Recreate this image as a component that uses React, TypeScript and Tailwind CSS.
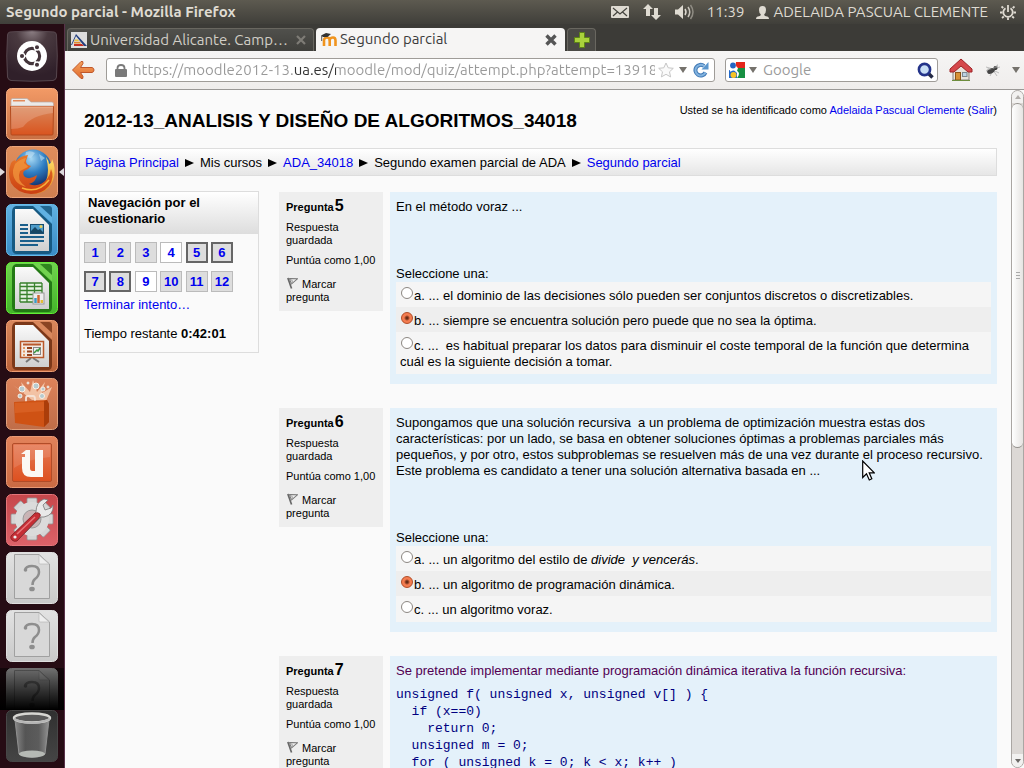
import { useState, type ReactNode } from "react";

/* ---------- Launcher icons ---------- */

function Gradient({ id, from, to }: { id: string; from: string; to: string }) {
  return (
    <linearGradient id={id} x1="0" y1="0" x2="0" y2="1">
      <stop offset="0" stopColor={from} />
      <stop offset="1" stopColor={to} />
    </linearGradient>
  );
}

function Tile({ id, from, to, edge, children }: { id: string; from: string; to: string; edge: string; children: ReactNode }) {
  return (
    <svg viewBox="0 0 52 52" className="block size-[52px]" aria-hidden="true">
      <defs>
        <Gradient id={id} from={from} to={to} />
      </defs>
      <rect x="0.5" y="0.5" width="51" height="51" rx="5" fill={`url(#${id})`} stroke={edge} />
      {children}
    </svg>
  );
}

function DashIcon() {
  return (
    <svg viewBox="0 0 52 52" className="block size-[52px]" aria-hidden="true">
      <defs>
        <radialGradient id="dash" cx="0.5" cy="0" r="0.9">
          <stop offset="0" stopColor="#8d8085" />
          <stop offset="0.35" stopColor="#4a3a40" />
          <stop offset="1" stopColor="#30202a" />
        </radialGradient>
      </defs>
      <path d="M4 2Q26-0.5 48 2Q50 2 50.500 5Q52 26 50.500 47Q50 50 47 50.500Q26 52 5 50.500Q2 50 1.500 47Q0 26 1.500 5Q2 2 4 2Z" fill="url(#dash)" stroke="#57474e" />
      <circle cx="26" cy="26" r="15" fill="#fff" />
      <circle cx="26" cy="26" r="7.600" fill="none" stroke="#44353b" strokeWidth="3.200" />
      <g stroke="#fff" strokeWidth="1.300">
        <path d="M26 26L15 26M26 26L31.500 16.500M26 26L31.500 35.500" />
        <circle cx="16" cy="26" r="2.700" fill="#44353b" />
        <circle cx="31" cy="17.300" r="2.700" fill="#44353b" />
        <circle cx="31" cy="34.700" r="2.700" fill="#44353b" />
      </g>
      <circle cx="26" cy="26" r="5.800" fill="#fff" />
    </svg>
  );
}

function FolderIcon() {
  return (
    <Tile id="tile-folder" from="#f29a66" to="#c97044" edge="#f3ab80">
      <defs>
        <Gradient id="folder" from="#d9875a" to="#d9541f" />
      </defs>
      <path d="M5 18V12Q5 10.500 6.500 10.500H21L25 14H46Q47.500 14 47.500 16V18Z" fill="#eceae8" stroke="#b8a8a0" strokeWidth="0.700" />
      <rect x="7" y="12" width="12" height="1.500" fill="#e28a5a" />
      <path d="M4.500 18.500H47.500L47 46Q47 47 46 47H6Q5 47 5 46Z" fill="url(#folder)" stroke="#b2491c" />
      <path d="M5 19H47V25Q26 27 17 39Q12 41 5 41Z" fill="#fff" opacity="0.180" />
      <path d="M5 19H47" stroke="#f4b48f" />
    </Tile>
  );
}

function FirefoxIcon() {
  return (
    <Tile id="tile-ff" from="#df8d5c" to="#cf7f50" edge="#eca57c">
      <defs>
        <radialGradient id="globe" cx="0.45" cy="0.25" r="0.75">
          <stop offset="0" stopColor="#a6d8f3" />
          <stop offset="0.5" stopColor="#2f7fc4" />
          <stop offset="1" stopColor="#12326f" />
        </radialGradient>
        <Gradient id="fox" from="#e8792a" to="#ca3e12" />
        <Gradient id="foxtail" from="#ffe36b" to="#ec8a1c" />
      </defs>
      <circle cx="27" cy="22" r="18.500" fill="url(#globe)" />
      <path d="M20 6Q25 4 29 7L25 12L19 11ZM33 8L39 12L35 15Z" fill="#c9e6f5" opacity="0.550" />
      <path d="M40 11Q43 15 43 18Q46 17 46 13Q50 22 48 31Q44 47 27 48Q36 43 40 35Q44 25 40 11Z" fill="url(#foxtail)" />
      <path d="M5 17Q8 13 10 15Q14 10 22 9L20 15Q20 19 25 20Q22 24 18 25Q16 28 19 31Q24 34 31 29Q30 36 23 38Q33 42 41 33Q44 29 45 23Q49 31 43 40Q36 48 25 48Q11 47 5 37Q1 27 5 17Z" fill="url(#fox)" />
      <path d="M9 18Q14 13 20 12L18 17Q22 20 22 21L14 25Q10 34 20 41Q6 37 7 24Z" fill="#f49a3e" opacity="0.700" />
      <path d="M16 42Q32 48 43 34" fill="none" stroke="#f8b13a" strokeWidth="1.500" />
    </Tile>
  );
}

function OfficeTile({ id, from, to, dark, edge, children }: { id: string; from: string; to: string; dark: string; edge: string; children: ReactNode }) {
  return (
    <Tile id={id} from={from} to={to} edge={edge}>
      <defs>
        <Gradient id={`${id}-page`} from="#fafafa" to="#cfcfcf" />
      </defs>
      <path d="M10 2Q6 3 6 8V44Q6 50 11 50H42Q46 50 46 45V20L27 2Z" fill={dark} />
      <path d="M28 2H43Q46 2 46 6V19Z" fill={from} />
      <path d="M34 2H43Q46 2 46 5V13Z" fill={dark} opacity="0.850" />
      <path d="M9 5H27L43 21V47H9Z" fill={`url(#${id}-page)`} />
      {children}
    </Tile>
  );
}

function WriterIcon() {
  return (
    <OfficeTile id="writer" from="#61b1e2" to="#398bc5" dark="#175981" edge="#67bce9">
      <path d="M14 21H22M14 25H22M14 29H22M14 33H38M14 37H38M14 41H32" stroke="#1b5f8b" strokeWidth="2" />
      <rect x="24.500" y="20.500" width="13" height="9" fill="#4e9cca" stroke="#184e71" />
      <path d="M25 29V27L29 23L32 26L34 25L37 28V29Z" fill="#174663" />
      <circle cx="35" cy="22.500" r="1.500" fill="#edd05d" />
    </OfficeTile>
  );
}

function CalcIcon() {
  return (
    <OfficeTile id="calc" from="#72d34f" to="#43b52a" dark="#237915" edge="#62ef36">
      <rect x="14" y="21" width="22" height="19" fill="#e8f3e4" />
      <path d="M14 21H36M14 24.500H36M14 28.500H36M14 32.500H36M14 36.500H36M14 40H36M14 21V40M21 21V40M28.500 21V40M36 21V40" stroke="#38812c" strokeWidth="1.300" />
      <rect x="27" y="31" width="11" height="11" fill="#eee" stroke="#999" />
      <path d="M29.500 41V36" stroke="#3c9bc6" strokeWidth="2.500" />
      <path d="M32.500 41V33" stroke="#cf6732" strokeWidth="2.500" />
      <path d="M35.800 41V38" stroke="#e2bd37" strokeWidth="2.500" />
    </OfficeTile>
  );
}

function ImpressIcon() {
  return (
    <OfficeTile id="impress" from="#d9875c" to="#b96138" dark="#7c3819" edge="#ed9c72">
      <path d="M25 38L20 42M27 38L33 42" stroke="#777" strokeWidth="2" />
      <rect x="14.500" y="21.500" width="23" height="16" fill="#f4ebe4" stroke="#b9582b" strokeWidth="1.500" />
      <path d="M17 24.500H35" stroke="#b9582b" strokeWidth="2" />
      <path d="M17 28H19M17 31.500H19M17 35H19" stroke="#e49a64" strokeWidth="2" />
      <path d="M21 28H26M21 31.500H26M21 35H26" stroke="#97431e" strokeWidth="2" />
      <rect x="27.500" y="27.500" width="7" height="7" fill="#eee" stroke="#888" />
      <path d="M28 33L31 30L32 31L34 28" fill="none" stroke="#36933c" strokeWidth="1.500" />
    </OfficeTile>
  );
}

function StoreIcon() {
  return (
    <Tile id="store" from="#dd825a" to="#c06d48" edge="#dfa07d">
      <path d="M26 22L7 7L18 15L15 4L24 14L27 2L31 14L39 4L36 15L46 9L40 23Z" fill="#ffdfc6" opacity="0.700" />
      <g fill="#b7cbcf" stroke="#faf0e7" strokeWidth="1">
        <circle cx="16" cy="11" r="3" />
        <circle cx="30" cy="8" r="3" />
        <circle cx="37" cy="11" r="2" />
        <circle cx="14" cy="18" r="2" />
        <circle cx="36" cy="18" r="2.500" />
        <circle cx="42" cy="9" r="1" />
        <circle cx="22" cy="5" r="1" />
      </g>
      <path d="M20 24V20Q20 18 22 18H27Q29 18 29 21V24" fill="none" stroke="#f5e2d5" strokeWidth="1.800" />
      <path d="M8 24L41 22L43 26V44L38 49L9 45Z" fill="#cf5214" />
      <path d="M38 23L41 22L43 26V44L38 49Z" fill="#ab3d0a" />
      <path d="M9 25L38 24V33L9 35Z" fill="#de692b" opacity="0.600" />
    </Tile>
  );
}

function UbuntuOneIcon() {
  return (
    <Tile id="uone" from="#e2825a" to="#ca6a43" edge="#e99a76">
      <defs>
        <Gradient id="uone-face" from="#e57a55" to="#dd501f" />
      </defs>
      <rect x="6.500" y="7.500" width="39" height="38" rx="1.500" fill="url(#uone-face)" stroke="#b14c28" />
      <path d="M8 9H44V21Q21 23 8 32Z" fill="#fff" opacity="0.120" />
      <path d="M20 14H24V32Q24 35 26.500 35H29V14H37V41H25Q16 41 16 32V21H19V18H15Z" fill="#fbf7f3" />
    </Tile>
  );
}

function SettingsIcon() {
  return (
    <Tile id="settings" from="#c6474b" to="#dc6269" edge="#e5767a">
      <g fill="#d5d5d5" stroke="#929292" strokeWidth="0.800">
        {[0, 45, 90, 135].map((angle) => (
          <rect key={angle} x="21" y="4" width="10" height="42" rx="1" transform={`rotate(${angle} 26 25)`} />
        ))}
      </g>
      <circle cx="26" cy="25" r="17" fill="#dbdbdb" />
      <circle cx="26" cy="25" r="9" fill="#c9b4b5" stroke="#999" />
      <path d="M6 42L30 18Q30 8 38 5L42 6L37 11L39 16L45 14L47 11Q48 21 38 23L35 23L12 46Z" fill="#e9e9e9" stroke="#777" strokeWidth="0.800" />
      <path d="M5 42L29 19Q32 18 34 20Q35 22 33 24L11 47Q8 48 6 46Q4 44 5 42Z" fill="#c52e35" stroke="#7e1a20" strokeWidth="0.800" />
      <path d="M11 40L29 23" stroke="#e8777b" strokeWidth="1.500" />
      <circle cx="9" cy="43" r="1.600" fill="#eee" />
    </Tile>
  );
}

function UnknownIcon({ id }: { id: string }) {
  return (
    <Tile id={id} from="#e2e2e2" to="#c9c9c9" edge="#dedede">
      <path d="M8.500 2.500H33L43.500 12V46.500H8.500Z" fill="#d8d8d8" stroke="#a0a0a0" />
      <path d="M33 3V11Q33 12 34 12H43Z" fill="#eeeeee" stroke="#b8b8b8" strokeWidth="0.700" />
      <path d="M19 18Q20 14 26 14Q33 14 33 20Q33 24 29 27Q26.500 29 26.500 33" fill="none" stroke="#8e8e8e" strokeWidth="2.500" />
      <circle cx="19.500" cy="18" r="1.800" fill="#8e8e8e" />
      <ellipse cx="26" cy="37" rx="2.800" ry="2.300" fill="#8e8e8e" />
    </Tile>
  );
}

function TrashIcon() {
  return (
    <Tile id="trash" from="#303030" to="#454545" edge="#474747">
      <defs>
        <linearGradient id="can">
          <stop offset="0" stopColor="#888" />
          <stop offset="0.3" stopColor="#555" />
          <stop offset="0.7" stopColor="#5c5c5c" />
          <stop offset="1" stopColor="#939393" />
        </linearGradient>
      </defs>
      <path d="M9 10L13 44Q26 51 39 44L43 10Z" fill="url(#can)" stroke="#909090" />
      <ellipse cx="26" cy="44" rx="13" ry="3.500" fill="#b5b9b4" />
      <ellipse cx="26" cy="8" rx="18" ry="4.500" fill="#5a5a5a" stroke="#d6d6d2" strokeWidth="2.500" />
      <path d="M8 9Q26 17 44 9" fill="none" stroke="#b5b5b5" strokeWidth="2" />
    </Tile>
  );
}

function LauncherItem({ label, children }: { label: string; children: ReactNode }) {
  return (
    <button type="button" aria-label={label} className="block shrink-0 rounded-md">
      {children}
    </button>
  );
}

function Launcher() {
  return (
    <nav aria-label="Lanzador" className="flex w-[65px] shrink-0 flex-col overflow-hidden border-r border-[#59324a] bg-[#260c14]">
      <div className="flex min-h-0 flex-1 flex-col gap-1.5 overflow-hidden pt-1.5">
        <div className="flex shrink-0 flex-col gap-1.5 px-1.5">
          <LauncherItem label="Inicio"><DashIcon /></LauncherItem>
          <LauncherItem label="Carpeta personal"><FolderIcon /></LauncherItem>
        </div>
        <div className="flex w-full shrink-0 items-center justify-between">
          <svg viewBox="0 0 5 10" className="h-2.5 w-[5px]" aria-hidden="true"><path d="M0 1L5 5L0 9Z" fill="#ded9dc" /></svg>
          <LauncherItem label="Firefox"><FirefoxIcon /></LauncherItem>
          <svg viewBox="0 0 5 10" className="h-2.5 w-[5px]" aria-hidden="true"><path d="M5 1L0 5L5 9Z" fill="#ded9dc" /></svg>
        </div>
        <div className="flex shrink-0 flex-col gap-1.5 px-1.5">
          <LauncherItem label="Writer"><WriterIcon /></LauncherItem>
          <LauncherItem label="Calc"><CalcIcon /></LauncherItem>
          <LauncherItem label="Impress"><ImpressIcon /></LauncherItem>
          <LauncherItem label="Centro de software"><StoreIcon /></LauncherItem>
          <LauncherItem label="Ubuntu One"><UbuntuOneIcon /></LauncherItem>
          <LauncherItem label="Configuración"><SettingsIcon /></LauncherItem>
          <LauncherItem label="Aplicación"><UnknownIcon id="unknown-a" /></LauncherItem>
          <LauncherItem label="Aplicación"><UnknownIcon id="unknown-b" /></LauncherItem>
        </div>
        <div className="relative w-full shrink-0 px-1.5">
          <LauncherItem label="Aplicación"><UnknownIcon id="unknown-c" /></LauncherItem>
          <div className="pointer-events-none absolute inset-0 bg-linear-to-b from-black/50 to-black to-80%" />
        </div>
      </div>
      <div className="flex px-1.5 pb-1.5">
        <LauncherItem label="Papelera"><TrashIcon /></LauncherItem>
      </div>
    </nav>
  );
}

/* ---------- System panel ---------- */

function SystemPanel() {
  return (
    <header className="flex h-6 shrink-0 items-center justify-between bg-linear-to-b from-[#5d5a50] to-[#403f3a] pr-2 pl-1.5 text-[#dfdbd2]">
      <h1 className="text-[15px] font-bold whitespace-nowrap">Segundo parcial - Mozilla Firefox</h1>
      <div className="flex items-center text-[15px] whitespace-nowrap">
        <button type="button" aria-label="Mensajes" className="mr-3.5">
          <svg viewBox="0 0 18 12" className="h-3 w-[18px]"><rect width="18" height="12" rx="1" fill="#dfdbd2" /><path d="M2 2L9 8L16 2M2 10L6.500 6M16 10L11.500 6" fill="none" stroke="#45443e" strokeWidth="1.200" /></svg>
        </button>
        <button type="button" aria-label="Red" className="mr-3.5">
          <svg viewBox="0 0 18 16" className="h-4 w-[18px]" fill="#dfdbd2"><path d="M5 0L10 5H7V12H3V5H0Z" /><path d="M13 16L18 11H15V4H11V11H8Z" /></svg>
        </button>
        <button type="button" aria-label="Sonido" className="mr-3">
          <svg viewBox="0 0 20 16" className="h-4 w-5" fill="none"><path d="M0 5.500H3L8 1V15L3 10.500H0Z" fill="#dfdbd2" /><path d="M10 5Q12 8 10 11" stroke="#dfdbd2" strokeWidth="1.500" /><path d="M13 3Q16.500 8 13 13" stroke="#c9c5bc" strokeWidth="1.500" /><path d="M15.500 1Q20.500 8 15.500 15" stroke="#8f8c83" strokeWidth="1.500" /></svg>
        </button>
        <time className="mr-3">11:39</time>
        <button type="button" className="flex items-center gap-1">
          <svg viewBox="0 0 13 13" className="size-[13px]" fill="#dfdbd2" aria-hidden="true"><path d="M6.500 0C9 0 10 1.500 10 4Q10 7 8.200 8.200Q8.200 10 10 10.200Q13 10.500 13 13H0Q0 10.500 3 10.200Q4.800 10 4.800 8.200Q3 7 3 4C3 1.500 4 0 6.500 0Z" /></svg>
          <span>ADELAIDA PASCUAL CLEMENTE</span>
        </button>
        <button type="button" aria-label="Apagar" className="ml-3">
          <svg viewBox="0 0 16 16" className="size-4" fill="none" stroke="#dfdbd2" strokeWidth="1.800"><path d="M5.500 4.200A4.700 4.700 0 1 0 10.500 4.200M8 1V8" /><path d="M1.500 2.500L3.300 4M14.500 2.500L12.700 4M0 8.500H2.500M13.500 8.500H16M2 14L3.800 12.500M14 14L12.200 12.500M8 13.500V16" /></svg>
        </button>
      </div>
    </header>
  );
}

/* ---------- Browser chrome ---------- */

function TabStrip() {
  return (
    <div className="flex h-[27px] shrink-0 items-end gap-0.5 bg-[#3c3b37] pl-0.5 text-[15px] whitespace-nowrap">
      <div className="flex h-[23px] w-[247px] items-center rounded-t border border-b-0 border-[#696760] bg-linear-to-b from-[#50504c] to-[#40403c] px-[3px] text-[#d1cec6]">
        <svg viewBox="0 0 16 16" className="mr-[3px] size-4 shrink-0" aria-hidden="true"><rect width="16" height="16" fill="#dedede" /><path d="M0 13L5 2L16 14H13L5 4L1 13Z" fill="#24417f" /><path d="M4 7.500H7L8 9H3Z" fill="#e8c33d" /><path d="M3 9.800H9L10 11.500H3Z" fill="#e08a2c" /><path d="M3 12H11L13 14H3Z" fill="#c52f24" /></svg>
        <span className="min-w-0 flex-1">Universidad Alicante. Camp…</span>
        <button type="button" aria-label="Cerrar pestaña">
          <svg viewBox="0 0 10 10" className="mr-1 size-2.5"><path d="M1 1L9 9M9 1L1 9" stroke="#7e7c76" strokeWidth="2.200" /></svg>
        </button>
      </div>
      <div className="flex h-[23px] w-[249px] items-center rounded-t bg-[#f6f5f4] px-[5px] text-[#3c3c3c]">
        <svg viewBox="0 0 16 14" className="mr-[3px] h-3.5 w-4 shrink-0" aria-hidden="true"><path d="M3 13V7Q3.500 4.500 6 4.500Q8 4.500 8.700 6.500Q9.500 4.500 12 4.500Q14.500 4.500 14.500 7.500V13" fill="none" stroke="#f0941e" strokeWidth="2.600" /><path d="M8.700 13V7" stroke="#f0941e" strokeWidth="2.600" /><path d="M0 2.500L5 0L10 1L6.500 4L2 4Z" fill="#333" /><path d="M0.700 3V8" stroke="#555" /></svg>
        <span className="flex-1">Segundo parcial</span>
        <button type="button" aria-label="Cerrar pestaña">
          <svg viewBox="0 0 12 12" className="mr-[3px] size-3"><path d="M1.500 1.500L10.500 10.500M10.500 1.500L1.500 10.500" stroke="#555" strokeWidth="3.400" /></svg>
        </button>
      </div>
      <button type="button" aria-label="Nueva pestaña" className="flex h-[23px] w-[29px] items-center justify-center rounded-t border border-b-0 border-[#696760] bg-[#4a4945]">
        <svg viewBox="0 0 16 16" className="size-4"><path d="M5.500 0.500H10.500V5.500H15.500V10.500H10.500V15.500H5.500V10.500H0.500V5.500H5.500Z" fill="#a9d13c" stroke="#5d8317" /></svg>
      </button>
    </div>
  );
}

function DownArrow() {
  return <svg viewBox="0 0 8 6" className="h-1.5 w-2 shrink-0" aria-hidden="true"><path d="M0 0H8L4 6Z" fill="#75726c" /></svg>;
}

function Toolbar() {
  return (
    <div className="flex h-[39px] shrink-0 items-center border-b border-[#9a9896] bg-linear-to-b from-[#f6f5f4] to-[#efedec] pr-1 pl-1.5 text-[15px]">
      <button type="button" aria-label="Atrás">
        <svg viewBox="0 0 24 20" className="h-5 w-6"><defs><Gradient id="back" from="#f5a25e" to="#df6a2c" /></defs><path d="M1.500 10L10 1.500Q12.500 0.500 12 3.500L9.500 7.500H21Q23 8 23 10Q23 12 21 12.500H9.500L12 16.500Q12.500 19.500 10 18.500Z" fill="url(#back)" stroke="#c0572a" /></svg>
      </button>
      <div className="ml-[11px] flex h-6 min-w-0 flex-1 items-center rounded-[3px] border border-[#9f9c98] bg-white px-[5px]">
        <svg viewBox="0 0 12 13" className="mx-[3px] h-[13px] w-3 shrink-0" aria-hidden="true"><rect y="5" width="12" height="8" rx="1" fill="#7a7a7a" /><path d="M2.500 6V4Q2.500 1 6 1Q9.500 1 9.500 4V6" fill="none" stroke="#7a7a7a" strokeWidth="1.800" /></svg>
        <input
          aria-label="Dirección"
          defaultValue="https://moodle2012-13.ua.es/moodle/mod/quiz/attempt.php?attempt=139187"
          className="ml-[3px] min-w-0 flex-1 bg-[linear-gradient(90deg,#999_160px,#333_160px,#333_203px,#999_203px)] bg-clip-text text-transparent outline-none"
        />
        <button type="button" aria-label="Añadir a marcadores" className="ml-[3px]">
          <svg viewBox="0 0 16 16" className="size-4"><path d="M8 1L10.200 5.800L15.300 6.300L11.500 9.800L12.600 14.900L8 12.300L3.400 14.900L4.500 9.800L0.700 6.300L5.800 5.800Z" fill="#fafafa" stroke="#c6c6c6" /></svg>
        </button>
        <button type="button" aria-label="Historial" className="ml-[5px]"><DownArrow /></button>
        <button type="button" aria-label="Recargar" className="ml-1.5">
          <svg viewBox="0 0 16 16" className="size-4"><path d="M12.500 10.500A5.300 5.300 0 1 1 11 4" fill="none" stroke="#4179b5" strokeWidth="4" /><path d="M12.500 10.500A5.300 5.300 0 1 1 11 4" fill="none" stroke="#82b3df" strokeWidth="2" /><path d="M15.500 0V7.500H8.500Z" fill="#5b96cd" /></svg>
        </button>
      </div>
      <div className="ml-2.5 flex h-6 w-[213px] items-center rounded-[3px] border border-[#9f9c98] bg-white px-[3px]">
        <svg viewBox="0 0 16 16" className="size-4 shrink-0" aria-hidden="true"><rect width="8" height="9" fill="#fff" /><path d="M7 0H16V6H9Q6 4 7 0Z" fill="#e3261b" /><path d="M9 6H16V16H8Q12 11 8 9Z" fill="#179042" /><path d="M0 8H5L8 11V16H0Z" fill="#2168c9" /><circle cx="4" cy="3.500" r="2.900" fill="#2365c4" /><circle cx="4.500" cy="13" r="3" fill="#f5c426" /><path d="M1 9Q6 6 8 10" stroke="#fff" fill="none" strokeWidth="1.500" /></svg>
        <button type="button" aria-label="Elegir buscador" className="ml-1"><DownArrow /></button>
        <input aria-label="Buscar" placeholder="Google" className="ml-1.5 min-w-0 flex-1 outline-none placeholder:text-[#9b9b9b]" />
        <button type="button" aria-label="Buscar en Google">
          <svg viewBox="0 0 17 17" className="size-[17px]"><path d="M11 11L15.500 15.500" stroke="#242a45" strokeWidth="3.500" /><circle cx="7.500" cy="7.500" r="5.600" fill="#c8def5" stroke="#24348a" strokeWidth="2.600" /></svg>
        </button>
      </div>
      <button type="button" aria-label="Página de inicio" className="ml-[11px]">
        <svg viewBox="0 0 24 24" className="size-6"><path d="M4 11L12 4L20 11V22H4Z" fill="#e8e3dc" stroke="#85807a" /><path d="M12 1L23 11V14H19L12 8L5 14H1V11Z" fill="#d5484b" stroke="#9e2327" /><rect x="6.500" y="14.500" width="5" height="7.500" fill="#d79136" stroke="#8c5518" /><rect x="13.500" y="14.500" width="4.500" height="4" fill="#bcd3e5" stroke="#7c8790" /><path d="M3 22.500H21" stroke="#6d8d3d" /></svg>
      </button>
      <button type="button" aria-label="Complemento" className="ml-3">
        <svg viewBox="0 0 16 14" className="h-3.5 w-4"><path d="M1 4L8 6L15 4M1 8L8 7L14 10M5 13L8 7L12 13" stroke="#a5a5a5" fill="none" strokeWidth="0.700" /><ellipse cx="6" cy="8" rx="4" ry="2.500" fill="#444" transform="rotate(-25 6 8)" /><circle cx="10.500" cy="5" r="2" fill="#252525" /><path d="M7 6L13 1L13 5ZM3 5L7 6L1 8Z" fill="#aaa" opacity="0.600" /></svg>
      </button>
      <button type="button" aria-label="Más" className="ml-[11px]"><DownArrow /></button>
    </div>
  );
}

/* ---------- Quiz page ---------- */

const link = "text-[#0000ee]";

function Separator() {
  return <svg viewBox="0 0 9 8" className="h-2 w-[9px] shrink-0" aria-hidden="true"><path d="M0 0L9 4L0 8Z" fill="#000" /></svg>;
}

function Breadcrumb() {
  return (
    <nav aria-label="Ruta" className="flex h-7 items-center gap-1.5 border border-[#dddddd] bg-linear-to-b from-white to-[#e6e6e6] px-[5px] pt-0.5 whitespace-nowrap">
      <a href="#inicio" className={link}>Página Principal</a>
      <Separator />
      <span>Mis cursos</span>
      <Separator />
      <a href="#ada" className={link}>ADA_34018</a>
      <Separator />
      <span>Segundo examen parcial de ADA</span>
      <Separator />
      <a href="#parcial" className={link}>Segundo parcial</a>
    </nav>
  );
}

const cells = [
  { n: 1 }, { n: 2 }, { n: 3 }, { n: 4, blank: true }, { n: 5, here: true }, { n: 6, here: true },
  { n: 7, here: true }, { n: 8, here: true }, { n: 9, blank: true }, { n: 10 }, { n: 11 }, { n: 12 },
];

function QuizNavigation() {
  return (
    <aside className="w-[180px] shrink-0 self-start border border-[#dddddd] bg-[#fafafa]">
      <h2 className="bg-linear-to-b from-white to-[#dddddd] px-2 pt-[3px] pb-[7px] font-bold">Navegación por el cuestionario</h2>
      <div className="px-1 pt-2 pb-2.5">
        <div className="grid w-[149px] grid-cols-[repeat(6,22px)] justify-between gap-y-2">
          {cells.map((cell) => (
            <a
              key={cell.n}
              href={`#q${cell.n}`}
              className={`flex h-[21px] items-center justify-center font-bold ${link} ${cell.blank ? "bg-white" : "bg-[#dddddd]"} ${cell.here ? "border-2 border-[#666666]" : "border border-[#bbbbbb]"}`}
            >
              {cell.n}
            </a>
          ))}
        </div>
        <p className="mt-[5px]"><a href="#terminar" className={link}>Terminar intento…</a></p>
        <p className="mt-[13px]">Tiempo restante <b>0:42:01</b></p>
      </div>
    </aside>
  );
}

function QuestionInfo({ number }: { number: number }) {
  return (
    <div className="w-26 shrink-0 self-start bg-[#eeeeee] px-[7px] pt-1.5 pb-[7px] text-[11px] leading-[13px]">
      <h3 className="flex items-baseline gap-px font-bold leading-4">
        Pregunta <span className="text-[16px]">{number}</span>
      </h3>
      <p className="mt-1.5">Respuesta guardada</p>
      <p className="mt-[7px] whitespace-nowrap">Puntúa como 1,00</p>
      <button type="button" className="mt-2.5 block text-left">
        <svg viewBox="0 0 13 13" className="mr-1 inline-block size-3 align-[-1px]" aria-hidden="true"><path d="M2 1L6 12.500" stroke="#666" strokeWidth="1.800" /><path d="M3.500 1.500L12.500 2L6 7.500Z" fill="none" stroke="#777" strokeWidth="1.100" /><path d="M3.500 2L7 4L6 7.500" fill="none" stroke="#999" /></svg>
        Marcar pregunta
      </button>
    </div>
  );
}

function Question({ number, children }: { number: number; children: ReactNode }) {
  return (
    <section id={`q${number}`} className="flex items-start gap-[7px]">
      <QuestionInfo number={number} />
      <div className="min-w-0 flex-1 bg-[#e4f1fa] px-1.5 pt-[7px] pb-2.5">{children}</div>
    </section>
  );
}

function Answers({ name, options }: { name: string; options: ReactNode[] }) {
  const [selected, setSelected] = useState(1);
  return (
    <fieldset className="mt-[51px]">
      <legend>Seleccione una:</legend>
      {options.map((option, i) => (
        <label key={i} className={`block px-1 pt-1.5 pb-[3px] last:pb-1 ${i % 2 ? "bg-[#eeeeee]" : "bg-[#f5f5f5]"}`}>
          <input
            type="radio"
            name={name}
            checked={selected === i}
            onChange={() => setSelected(i)}
            className="-mt-px mr-px ml-px inline-block size-3 appearance-none rounded-full border border-[#8c8782] bg-white align-[1px] checked:border-[#b04a24] checked:bg-[radial-gradient(circle,#6b2c16_0,#6b2c16_1px,#f47c50_3px)]"
          />
          {option}
        </label>
      ))}
    </fieldset>
  );
}

const code = `unsigned f( unsigned x, unsigned v[] ) {
  if (x==0)
    return 0;
  unsigned m = 0;
  for ( unsigned k = 0; k < x; k++ )`;

function QuizPage() {
  return (
    <main className="min-w-0 flex-1 overflow-hidden px-3.5 font-['Liberation_Sans',Arial,sans-serif] text-[13px] leading-4 text-black">
      <div className="flex items-start justify-between pt-3.5 pl-[5px]">
        <h1 className="pt-1 text-[19px] leading-[26px] font-bold whitespace-nowrap">2012-13_ANALISIS Y DISEÑO DE ALGORITMOS_34018</h1>
        <p className="text-[11px] leading-[13px] whitespace-nowrap">
          Usted se ha identificado como <a href="#perfil" className={link}>Adelaida Pascual Clemente</a> (<a href="#salir" className={link}>Salir</a>)
        </p>
      </div>
      <div className="mt-3.5">
        <Breadcrumb />
      </div>
      <div className="mt-[15px] flex items-start gap-5">
        <QuizNavigation />
        <div className="flex min-w-0 flex-1 flex-col gap-6 pt-px">
          <Question number={5}>
            <p>En el método voraz ...</p>
            <Answers
              name="q5"
              options={[
                "a. ... el dominio de las decisiones sólo pueden ser conjuntos discretos o discretizables.",
                "b. ... siempre se encuentra solución pero puede que no sea la óptima.",
                "c. ... \u00a0es habitual preparar los datos para disminuir el coste temporal de la función que determina cuál es la siguiente decisión a tomar.",
              ]}
            />
          </Question>
          <Question number={6}>
            <p>
              Supongamos que una solución recursiva&nbsp; a un problema de optimización muestra estas dos características: por un lado, se basa en obtener soluciones óptimas a problemas parciales más pequeños, y por otro, estos subproblemas se resuelven más de una vez durante el proceso recursivo. Este problema es candidato a tener una solución alternativa basada en ...
            </p>
            <Answers
              name="q6"
              options={[
                <span key="a">a. ... un algoritmo del estilo de <i>divide&nbsp; y vencerás</i>.</span>,
                "b. ... un algoritmo de programación dinámica.",
                "c. ... un algoritmo voraz.",
              ]}
            />
          </Question>
          <Question number={7}>
            <p className="text-[#520052]">Se pretende implementar mediante programación dinámica iterativa la función recursiva:</p>
            <pre className="mt-[7px] font-['Liberation_Mono',monospace] text-[13px] leading-[17px] text-[#000080]">{code}</pre>
          </Question>
        </div>
      </div>
    </main>
  );
}

function ScrollBar() {
  return (
    <div aria-hidden="true" className="flex w-[13px] shrink-0 flex-col rounded-[7px] border border-[#aaa6a3] bg-[#dcd8d5]">
      <div className="flex h-3 shrink-0 items-center justify-center rounded-t-[7px] bg-[#f2f1f0]">
        <svg viewBox="0 0 6 4" className="h-1 w-1.5"><path d="M0 4H6L3 0Z" fill="#b0adaa" /></svg>
      </div>
      <div className="flex min-h-0 flex-1 flex-col">
        <div className="flex h-[53%] flex-col items-center justify-center gap-0.5 rounded-[7px] border-y border-[#96938f] bg-linear-to-r from-white to-[#e6e4e2]">
          <span className="h-px w-1 bg-[#aaa]" />
          <span className="h-px w-1 bg-[#aaa]" />
          <span className="h-px w-1 bg-[#aaa]" />
        </div>
      </div>
      <div className="flex h-[13px] shrink-0 items-center justify-center rounded-b-[7px] bg-[#f2f1f0]">
        <svg viewBox="0 0 6 4" className="h-1 w-1.5"><path d="M0 0H6L3 4Z" fill="#6c6966" /></svg>
      </div>
    </div>
  );
}

export default function App() {
  return (
    <div className="relative flex h-screen flex-col overflow-hidden bg-[#fafafa] font-['Ubuntu','Noto_Sans',sans-serif]">
      <SystemPanel />
      <div className="flex min-h-0 flex-1">
        <Launcher />
        <div className="flex min-w-0 flex-1 flex-col">
          <TabStrip />
          <Toolbar />
          <div className="flex min-h-0 flex-1">
            <QuizPage />
            <ScrollBar />
          </div>
        </div>
      </div>
      <svg viewBox="0 0 13 21" className="pointer-events-none absolute top-[460px] left-[862px] h-[21px] w-[13px]" aria-hidden="true">
        <path d="M0.700 1V17.500L4.500 13.800L7.300 20L9.800 18.800L7.200 12.800H12.300Z" fill="#fff" stroke="#000" strokeWidth="1.200" />
      </svg>
    </div>
  );
}
